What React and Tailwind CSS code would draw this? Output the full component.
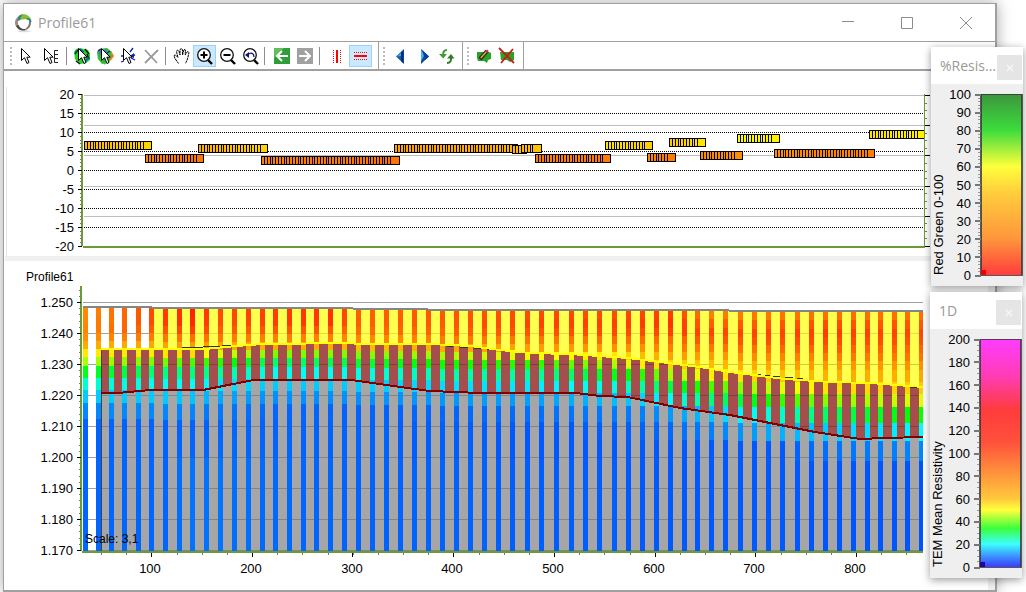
import React from "react";

const AXIS = "#6b9b34";
const LABEL = { fontFamily: "'Liberation Sans', Arial, sans-serif" };

/* ---------- toolbar icons ---------- */

function Icon({ children }) {
  return (
    <svg viewBox="0 0 20 20" className="h-5 w-5 shrink-0" fill="none" aria-hidden="true">
      {children}
    </svg>
  );
}

function Arrow({ x = 0 }) {
  return (
    <path
      transform={`translate(${x} 0)`}
      d="M6.5 2.5V14.5L9.5 11.7L12 17.5L14 16.5L11.8 11.2H15.2Z"
      fill="#fff"
      stroke="#000"
    />
  );
}

function Lens({ children }) {
  return (
    <Icon>
      <path d="M14 14L18 18" stroke="#000" strokeWidth="2.4" />
      <circle cx="10" cy="9" r="6.3" fill="#fff" stroke="#111" strokeWidth="1.3" />
      {children}
    </Icon>
  );
}

const icons = {
  select: (
    <Icon>
      <Arrow />
    </Icon>
  ),
  selectE: (
    <Icon>
      <Arrow x={-4} />
      <path d="M16 4.5H12.5V16.5H16M12.5 8.5H16M12.5 12.5H16" stroke="#222" />
    </Icon>
  ),
  greenSelect: (
    <Icon>
      <path d="M4 3L8 2L12 3L16 4L18 8V14L14 17L8 18L3 13L2 6Z" fill="#1fd51f" />
      <path d="M3 8L6 4M13 3L17 8M15 8L17 13M4 15L8 18" stroke="#111" strokeWidth="1.4" />
      <path d="M8 3L12 6M13 16L17 11M3 6H5" stroke="#174bd0" strokeWidth="1.4" />
      <Arrow />
    </Icon>
  ),
  colorSelect: (
    <Icon>
      <path d="M4 3L12 2L17 6L18 11L14 16L7 18L3 13L2 6Z" fill="#35b13f" />
      <path d="M4 4H13L16 8H4Z" fill="#4777c4" />
      <path d="M16 7L18 10L15 14" stroke="#f08019" strokeWidth="2" />
      <path d="M3 11L7 16M12 4L15 8M9 18L14 14" stroke="#21d521" strokeWidth="2" />
      <path d="M3 5L6 3M12 7L15 5" stroke="#222a7c" strokeWidth="1.5" />
      <Arrow />
    </Icon>
  ),
  lineSelect: (
    <Icon>
      <path d="M15 2L12 6M3 10H6M3 16L6 15M12 10L17 9M13 12L17 14" stroke="#0b18d8" strokeWidth="1.3" />
      <path d="M12 10L16 7V12Z" fill="#082a9a" />
      <Arrow x={-1} />
    </Icon>
  ),
  cross: (
    <Icon>
      <path d="M4 4L16 17M17 4L4 17" stroke="#9a9a9a" strokeWidth="1.8" />
    </Icon>
  ),
  hand: (
    <Icon>
      <path
        d="M7.5 17.5L4 12.5L3 9.5L4.5 9L7 11.5L5.5 5.5L6.5 4L8 5L9 9V3.5L10.5 2.5L11.5 4V9L13 3.5L14.5 4L14.2 9L16.5 5.5L18 6.5L16.5 13L14.5 17.5"
        fill="#fff"
        stroke="#000"
        strokeDasharray="2.5 .5"
      />
    </Icon>
  ),
  zoomIn: (
    <Lens>
      <path d="M6.5 9H13.5M10 5.5V12.5" stroke="#000" strokeWidth="2" />
    </Lens>
  ),
  zoomOut: (
    <Lens>
      <path d="M6.5 9H13.5" stroke="#000" strokeWidth="2" />
    </Lens>
  ),
  zoomBack: (
    <Lens>
      <path d="M5 9L9 6V12Z" fill="#101080" />
      <path d="M8 8.5C11 6 14 7 14 11" stroke="#101080" strokeWidth="1.3" />
    </Lens>
  ),
  left: (
    <Icon>
      <rect x="2" y="2" width="16" height="16" fill="#2f9e3a" />
      <path d="M2 2H12L2 12Z" fill="#62bd5f" />
      <path d="M16 10H5M10 5L5 10L10 15" stroke="#fff" strokeWidth="2" />
    </Icon>
  ),
  right: (
    <Icon>
      <rect x="2" y="2" width="16" height="16" fill="#a0a0a0" />
      <path d="M4 10H15M10 5L15 10L10 15" stroke="#fff" strokeWidth="2" />
    </Icon>
  ),
  vertical: (
    <Icon>
      <rect x="9" y="4" width="2" height="13" fill="#f00" />
      <path d="M6.5 4V17M13.5 4V17" stroke="#f00" strokeDasharray="1 1" />
    </Icon>
  ),
  horizontal: (
    <Icon>
      <rect x="4" y="9" width="13" height="2" fill="#f00" />
      <path d="M4 6.5H17M4 13.5H17" stroke="#f00" strokeDasharray="1 1" />
    </Icon>
  ),
  previous: (
    <Icon>
      <path d="M14 3V18L6 10.5Z" fill="#0b5fb4" />
      <path d="M13.5 4V17.5L11 15V6.5Z" fill="#062d75" />
      <path d="M7 10.5L11 6.8V10Z" fill="#3fa5e8" />
    </Icon>
  ),
  next: (
    <Icon>
      <path d="M8 3V18L16 10.5Z" fill="#0a4fa8" />
      <path d="M8 4L12 8L8 15Z" fill="#48aef0" />
      <path d="M9 3.8L16 10.5L12 14Z" fill="#0b3f96" />
    </Icon>
  ),
  refresh: (
    <Icon>
      <path d="M11 4C8 4 7 6 7.2 9" stroke="#3f9a35" strokeWidth="2" />
      <path d="M3 8H11L7.2 12.5Z" fill="#3f9a35" />
      <path d="M11 17C14.5 17 15.2 14.5 15 12" stroke="#2c7d25" strokeWidth="2" />
      <path d="M11 12.5H18.5L15 8Z" fill="#2c7d25" />
    </Icon>
  ),
  edit: (
    <Icon>
      <path d="M3 6H15L17 7V13L14 14L13 17L10 15H4L3 12Z" fill="#27a327" />
      <path d="M6 13L13 5" stroke="#3c2222" strokeWidth="4" />
      <path d="M6.8 12L12.5 5.5" stroke="#d6b04c" strokeWidth="1.4" />
      <path d="M12 6.5L14 4.3" stroke="#c83a3a" strokeWidth="2.2" />
    </Icon>
  ),
  remove: (
    <Icon>
      <path d="M3 6H17V14L13 16L10 14L4 14Z" fill="#27a327" />
      <path d="M2 2L17 17M16 3L4 17" stroke="#d01818" strokeWidth="1.8" />
    </Icon>
  ),
};

function Tool({ name, label, active = false, wide = false }) {
  return (
    <button
      type="button"
      aria-label={label}
      className={`flex h-[22px] shrink-0 items-center border ${wide ? "w-[27px] pl-1" : "w-[23px]"} ${
        active ? "border-[#99d1ff] bg-[#cce8ff]" : "border-transparent"
      }`}
    >
      {icons[name]}
    </button>
  );
}

const Separator = ({ wide = false }) => (
  <div className={`ml-0.5 h-[18px] w-px bg-[#8c8c8c] ${wide ? "mr-1.5" : "mr-1"}`} />
);

function Grip() {
  return (
    <div className="mr-px flex h-5 w-[3px] flex-col justify-between py-px">
      {[0, 1, 2, 3, 4].map((i) => (
        <span key={i} className="h-0.5 w-0.5 bg-[#bdbdbd]" />
      ))}
    </div>
  );
}

function Toolbar() {
  return (
    <div role="toolbar" aria-label="Profile tools" className="flex h-[30px] border-b-2 border-t border-[#a0a0a0] bg-white">
      <div className="flex items-center border-r border-[#a0a0a0] pl-1.5 pr-1.5">
        <Grip />
        <Tool name="select" label="Select" />
        <Tool name="selectE" label="Select element" wide />
        <Separator />
        <Tool name="greenSelect" label="Select models" />
        <Tool name="colorSelect" label="Select colored models" />
        <Tool name="lineSelect" label="Select line" />
        <Tool name="cross" label="Delete" />
        <Separator />
        <Tool name="hand" label="Pan" />
        <Tool name="zoomIn" label="Zoom in" active />
        <Tool name="zoomOut" label="Zoom out" />
        <Tool name="zoomBack" label="Zoom previous" />
        <Separator wide />
        <Tool name="left" label="Move left" />
        <Tool name="right" label="Move right" />
        <Separator wide />
        <Tool name="vertical" label="Vertical marker" />
        <Tool name="horizontal" label="Horizontal marker" active />
      </div>
      <div className="flex items-center border-r border-[#a0a0a0] px-1">
        <Grip />
        <div className="w-0.5" />
        <Tool name="previous" label="Previous profile" />
        <Tool name="next" label="Next profile" />
        <Tool name="refresh" label="Refresh" />
      </div>
      <div className="flex items-center border-r border-[#a0a0a0] px-1">
        <Grip />
        <div className="w-0.5" />
        <Tool name="edit" label="Edit surface" />
        <Tool name="remove" label="Remove surface" />
      </div>
    </div>
  );
}

/* ---------- residual chart ---------- */

// [x start, x end, top, fill at start, fill at end]
const residuals = [
  [84, 152, 141, "#ffb700", "#ffd800"],
  [145, 204, 154, "#ff8a00", "#ff7600"],
  [198, 268, 144, "#ffb000", "#ffd800"],
  [261, 400, 156, "#ff8400", "#ff7200"],
  [394, 518, 144, "#ffa400", "#ffb400"],
  [512, 527, 145, "#ffb400", "#ffc400"],
  [521, 542, 144, "#ffb800", "#ffc800"],
  [535, 611, 154, "#ff8000", "#ff7c00"],
  [605, 653, 141, "#ffe800", "#ffcc00"],
  [647, 676, 153, "#ff8600", "#ff7800"],
  [669, 706, 138, "#ffc800", "#ffe600"],
  [700, 743, 151, "#ff8800", "#ff8e00"],
  [737, 780, 134, "#ffff00", "#fff000"],
  [774, 875, 149, "#ff9000", "#ff7e00"],
  [869, 925, 130, "#ffe000", "#fff000"],
];

function range(from, to, step) {
  const out = [];
  for (let v = from; v <= to + 0.001; v += step) out.push(v);
  return out;
}

function ResidualChart() {
  return (
    <svg viewBox="5 71 983 185" className="block h-auto w-full" role="img" aria-label="Residual chart">
      <g shapeRendering="crispEdges">
        <rect x="6" y="87" width="1" height="169" fill="#e3e3e3" />
        {[95, 125, 155, 186, 216].map((y) => (
          <rect key={y} x="84" y={y} width="841" height="1" fill="#bdbdbd" />
        ))}
        {range(113, 227, 19).map((y) => (
          <path key={y} d={`M84 ${y + 0.5}H924`} stroke="#000" strokeDasharray="1 1" />
        ))}
        {residuals.map(([x1, x2, y, a, b], i) => (
          <g key={i}>
            <linearGradient id={`res${i}`}>
              <stop offset="0" stopColor={a} />
              <stop offset="1" stopColor={b} />
            </linearGradient>
            <rect x={x1 + 0.5} y={y + 0.5} width={x2 - x1 - 1} height="8" fill={`url(#res${i})`} stroke="#000" />
            {range(x1 + 3, x2 - 8, 2.8).map((x) => (
              <rect key={x} x={Math.round(x)} y={y} width="1" height="9" fill="#000" />
            ))}
          </g>
        ))}
        <rect x="81" y="94" width="2" height="152" fill={AXIS} />
        <rect x="83" y="246" width="842" height="2" fill={AXIS} />
        <rect x="924" y="94" width="1" height="152" fill={AXIS} />
        {range(94, 246, 3.8).map((y) => (
          <rect key={y} x="80" y={Math.round(y)} width="1" height="1" fill="#777" />
        ))}
        {range(94, 246, 19).map((y) => (
          <rect key={y} x="78" y={y} width="4" height="1" fill="#000" />
        ))}
        {range(95, 246, 7.55).map((y) => (
          <rect key={y} x="925" y={Math.round(y)} width="2" height="1" fill="#777" />
        ))}
        {[95, 125, 155, 186, 216, 246].map((y) => (
          <rect key={y} x="925" y={y} width="5" height="1" fill="#000" />
        ))}
      </g>
      <g fontSize="13" textAnchor="end" fill="#000" style={LABEL}>
        {[20, 15, 10, 5, 0, -5, -10, -15, -20].map((v, i) => (
          <text key={v} x="74" y={99 + 19 * i}>
            {v}
          </text>
        ))}
      </g>
    </svg>
  );
}

/* ---------- resistivity section ---------- */

const columns = [
  83, 96, 109, 122, 136, 149, 163, 177, 190, 204, 218, 232, 246, 260, 273, 287, 301, 314, 328, 342, 356, 370, 384,
  398, 412, 426, 440, 454, 468, 482, 496, 510, 525, 539, 554, 569, 583, 597, 612, 626, 640, 654, 668, 682, 695, 709,
  723, 738, 752, 766, 780, 795, 809, 823, 837, 851, 865, 878, 892, 905, 919,
];

const layerDepths = [0, 8, 17, 25, 33, 41, 49, 58, 70, 82, 95, 111, 129, 149];

// Hue of every layer at selected distances; values between are interpolated.
const layerHues = [
  [83, [33, 32, 31, 34, 40, 55, 80, 125, 168, 192, 208, 217, 217, 216]],
  [122, [24, 24, 24, 30, 40, 56, 86, 136, 172, 192, 208, 217, 217, 216]],
  [163, [14, 14, 20, 28, 38, 54, 94, 152, 177, 192, 208, 217, 217, 216]],
  [190, [8, 9, 14, 26, 36, 52, 104, 150, 178, 194, 209, 217, 216, 213]],
  [218, [18, 18, 22, 28, 38, 70, 112, 156, 186, 200, 212, 216, 215, 213]],
  [273, [14, 14, 20, 30, 40, 92, 146, 177, 192, 206, 216, 217, 216, 215]],
  [328, [12, 12, 20, 30, 40, 90, 140, 177, 192, 206, 216, 217, 217, 216]],
  [356, [22, 22, 25, 32, 44, 92, 135, 174, 192, 206, 217, 217, 217, 217]],
  [440, [21, 21, 23, 29, 40, 82, 118, 160, 188, 204, 216, 218, 218, 217]],
  [539, [17, 15, 19, 27, 37, 60, 110, 156, 184, 202, 214, 219, 219, 218]],
  [612, [18, 15, 17, 25, 34, 54, 80, 126, 172, 195, 211, 218, 219, 218]],
  [640, [16, 14, 18, 25, 34, 44, 56, 112, 158, 190, 210, 217, 219, 219]],
  [668, [14, 12, 15, 24, 30, 38, 50, 82, 136, 178, 204, 215, 219, 219]],
  [709, [30, 22, 16, 20, 28, 36, 44, 57, 104, 150, 193, 210, 219, 219]],
  [780, [27, 20, 16, 18, 24, 31, 38, 46, 68, 108, 166, 198, 219, 219]],
  [820, [26, 18, 14, 17, 22, 29, 36, 42, 54, 90, 145, 192, 214, 220]],
  [923, [26, 21, 17, 19, 24, 27, 34, 40, 48, 66, 116, 180, 208, 220]],
];

function huesAt(x) {
  let i = 0;
  while (i < layerHues.length - 2 && layerHues[i + 1][0] < x) i++;
  const [x0, a] = layerHues[i];
  const [x1, b] = layerHues[i + 1];
  const t = (x - x0) / (x1 - x0);
  return a.map((h, k) => h + (b[k] - h) * t);
}

function surfaceAt(x) {
  if (x < 152) return 308;
  if (x < 353) return 309;
  if (x < 428) return 310;
  if (x < 729) return 311;
  return 312;
}

const topLine =
  "101,349 205,349 225,347 262,344 352,343 356,344 430,344 470,346 500,350 530,353 570,354 628,358 668,363 700,367 730,372 785,379 830,382 870,383 923,387";
const baseLine =
  "101,393 118,393 150,390 203,390 228,385 254,380 352,380 400,387 430,391 480,393 576,393 600,396 628,397 680,408 730,415 780,425 815,432 860,439 885,438 923,437";
const reversed = (points) => points.split(" ").reverse().join(" ");

function SectionChart() {
  return (
    <svg viewBox="5 261 983 329" className="block h-auto w-full" role="img" aria-label="Resistivity section">
      <g shapeRendering="crispEdges">
        <polygon
          fill="#ffff50"
          points={`152,308 353,308 353,309 729,310 729,312 923,312 ${reversed(topLine.replace("101,349", "152,349"))}`}
        />
        <polygon fill="#a64d4d" points={`${topLine} ${reversed(baseLine)}`} />
        <polygon fill="#a6a6a6" points={`${baseLine} 923,551 101,551`} />
        {range(302, 550, 31).map((y) => {
          const start = y > 349 ? 101 : 152;
          return (
            <g key={y}>
              <rect x="83" y={y} width={start - 83} height="1" fill="#a0a0a0" />
              <rect
                x={start}
                y={y}
                width={923 - start}
                height="1"
                fill={y === 302 ? "#a0a0a0" : "#000"}
                fillOpacity={y === 302 ? 1 : y < 340 ? 0.12 : 0.2}
              />
            </g>
          );
        })}
        <rect x="101" y="349" width="1" height="202" fill="#444" />
        {columns.map((x) => {
          const s = surfaceAt(x);
          const hues = huesAt(x);
          const w = Math.min(5, 923 - x);
          return (
            <g key={x}>
              {layerDepths.map((d, k) => (
                <rect
                  key={d}
                  x={x}
                  y={s + d}
                  width={w}
                  height={(k < 13 ? s + layerDepths[k + 1] : 551) - s - d}
                  fill={`hsl(${hues[k].toFixed(0)} 100% 50%)`}
                />
              ))}
            </g>
          );
        })}
        <path
          d="M83 307H152M152 308H353M353 309H428M428 310H729M729 311H923"
          stroke="#858585"
          strokeWidth="2"
        />
        <path
          d="M182 347.5H203M203 346.5H222M222 345.5H241M278 344.5H286M292 344.5H301M447 346.5H453M460 347.5H468M474 348.5H482M487 349.5H503M757 374.5H761M765 375.5H770M773 376.5H780M785 377.5H793M797 378.5H803M890 385.5H900M910 387.5H923"
          stroke="#333"
          fill="none"
        />
        <polyline points={topLine} fill="none" stroke="#ff0" strokeWidth="2" />
        <polyline points={baseLine} fill="none" stroke="#800000" strokeWidth="2" />
        <rect x="80" y="286" width="2" height="265" fill={AXIS} />
        <rect x="82" y="551" width="841" height="2" fill={AXIS} />
        {range(289.6, 550, 6.2).map((y) => (
          <rect key={y} x="79" y={Math.round(y)} width="1" height="1" fill="#777" />
        ))}
        {range(302, 550, 31).map((y) => (
          <rect key={y} x="77" y={y} width="4" height="1" fill="#000" />
        ))}
        {range(101, 923, 25.17).map((x) => (
          <rect key={x} x={Math.round(x)} y="553" width="1" height="2" fill="#777" />
        ))}
        {range(151, 860, 100.7).map((x) => (
          <rect key={x} x={Math.round(x)} y="553" width="1" height="4" fill="#000" />
        ))}
      </g>
      <g fill="#000" style={LABEL}>
        <g fontSize="12">
          <text x="26" y="281">
            Profile61
          </text>
          <text x="85" y="543">
            Scale: 3,1
          </text>
        </g>
        <g fontSize="13" textAnchor="end">
          {range(0, 8, 1).map((i) => (
            <text key={i} x="73" y={307 + 31 * i}>
              {(1.25 - 0.01 * i).toFixed(3)}
            </text>
          ))}
        </g>
        <g fontSize="13" textAnchor="middle">
          {range(1, 8, 1).map((i) => (
            <text key={i} x={Math.round(49.5 + 100.7 * i)} y="573">
              {i * 100}
            </text>
          ))}
        </g>
      </g>
    </svg>
  );
}

/* ---------- legend windows ---------- */

function Legend({ id, title, unit, ticks, barHeight, stops, marker, minor, className }) {
  const step = barHeight / (ticks.length - 1);
  return (
    <section aria-label={title} className={`absolute w-[92px] bg-white shadow-[0_2px_8px_rgba(0,0,0,0.4)] ${className}`}>
      <header className="flex h-[37px] items-center justify-between pl-[9px] pr-px">
        <h2 className="font-['Open_Sans',sans-serif] text-[14px] leading-5 text-[#999]">{title}</h2>
        <button
          type="button"
          aria-label={`Close ${title}`}
          className="mt-1 flex h-[25px] w-[25px] shrink-0 items-center justify-center bg-[#e5e5e5]"
        >
          <svg viewBox="0 0 8 8" className="h-2 w-2" aria-hidden="true">
            <path d="M1 1L7 7M7 1L1 7" stroke="#f6f6f6" strokeWidth="1.5" />
          </svg>
        </button>
      </header>
      <svg viewBox={`0 0 92 ${barHeight + 21}`} className="block h-auto w-full bg-[#efefef]" role="img" aria-label={unit}>
        <linearGradient id={id} x1="0" y1="0" x2="0" y2="1">
          {stops.map(([o, c]) => (
            <stop key={o} offset={o} stopColor={c} />
          ))}
        </linearGradient>
        <g shapeRendering="crispEdges">
          <rect x="50" y="10" width="41" height={barHeight} fill={`url(#${id})`} />
          <path d={`M91 10.5H50V${barHeight + 10.5}H91V10`} stroke="#333" strokeOpacity=".8" strokeWidth="1.5" fill="none" />
          <rect x="50" y={barHeight + 5} width="5" height="5" fill={marker} />
          {range(0, barHeight, step / minor).map((y) => (
            <rect key={y} x="47" y={Math.round(10 + y)} width="2" height="1" fill="#999" />
          ))}
          {ticks.map((t, i) => (
            <rect key={t} x="44" y={Math.round(9.5 + step * i)} width="6" height="2" fill="#777" />
          ))}
        </g>
        <g fontSize="13" fill="#000" style={LABEL}>
          <g textAnchor="end">
            {ticks.map((t, i) => (
              <text key={t} x="40" y={Math.round(15 + step * i)}>
                {t}
              </text>
            ))}
          </g>
          <text transform={`translate(12 ${barHeight + 10}) rotate(-90)`}>{unit}</text>
        </g>
      </svg>
    </section>
  );
}

/* ---------- main window ---------- */

function Logo() {
  return (
    <svg viewBox="0 0 20 20" className="h-5 w-5" fill="none" aria-hidden="true">
      <ellipse cx="11" cy="18.3" rx="6" ry="1" fill="#ddd" />
      <path d="M7 2.5C2 5 .5 10 3.5 14L6 13C4 9.5 5 6.5 8 5Z" fill="#a18b7c" />
      <path d="M3 13C5 17 9 18.5 13 17L12 16C9 16.5 7 15 5.5 12Z" fill="#4a4a48" />
      <path d="M13 17C17 15.5 19 11 17.5 7L16 7C16.5 10.5 15.5 14 12 16Z" fill="#77756c" />
      <path d="M6 2.5C10 0 16 1 18.5 7L17.5 8C14 6 10 5.5 6 7.5Z" fill="#84bd31" />
      <path d="M5.5 3.5C7 2 9 1.5 10 1.5C8 3 7.5 5 7 7L4.5 8Z" fill="#27839a" />
      <path d="M14 6C16 5 17 7 18 9" stroke="#27839a" strokeWidth="1.5" />
    </svg>
  );
}

function TitleBar() {
  return (
    <header className="flex h-[37px] items-center bg-white pl-[9px]">
      <Logo />
      <h1 className="ml-[5px] flex-1 font-['Open_Sans',sans-serif] text-[14px] leading-5 text-[#999]">Profile61</h1>
      <div className="flex">
        {[
          ["Minimize", "M4 8.5H16"],
          ["Maximize", "M4.5 4.5H15.5V15.5H4.5Z"],
          ["Close", "M4 4L16 16M16 4L4 16"],
        ].map(([label, d]) => (
          <button key={label} type="button" aria-label={label} className="flex h-9 w-[59px] items-center justify-center">
            <svg viewBox="0 0 20 20" className="h-5 w-5" fill="none" aria-hidden="true">
              <path d={d} stroke="#8c8c8c" />
            </svg>
          </button>
        ))}
      </div>
    </header>
  );
}

export default function App() {
  return (
    <div className="relative min-h-screen overflow-hidden bg-white pl-[3px] pr-[29px] pt-[3px] font-['Liberation_Sans',Arial,sans-serif]">
      <main className="border border-b-2 border-r-2 border-[#a0a0a0] bg-white shadow-[0_0_14px_rgba(0,0,0,0.35)]">
        <TitleBar />
        <Toolbar />
        <div className="flex">
          <div className="min-w-0 flex-1 pl-px">
            <ResidualChart />
            <div className="h-[5px] bg-[#efefef]" />
            <SectionChart />
          </div>
          <div className="w-[7px] shrink-0 bg-[#efefef]" />
        </div>
      </main>
      <Legend
        id="percent"
        title="%Resis..."
        unit="Red Green 0-100"
        className="right-[3px] top-[47px]"
        ticks={[100, 90, 80, 70, 60, 50, 40, 30, 20, 10, 0]}
        barHeight={181}
        minor={5}
        marker="#f00000"
        stops={[
          [0, "#3c963c"],
          [0.2, "#3cdc3c"],
          [0.4, "#ffff3c"],
          [0.55, "#ffcc3c"],
          [0.8, "#ff963c"],
          [1, "#ff3c3c"],
        ]}
      />
      <Legend
        id="mean"
        title="1D"
        unit="TEM Mean Resistivity"
        className="right-1 top-[292px]"
        ticks={[200, 180, 160, 140, 120, 100, 80, 60, 40, 20, 0]}
        barHeight={228}
        minor={4}
        marker="#280096"
        stops={[
          [0, "#ff3cff"],
          [0.17, "#ff3cb0"],
          [0.31, "#ff3c3c"],
          [0.45, "#ff503c"],
          [0.7, "#ffc83c"],
          [0.75, "#ffff3c"],
          [0.83, "#3cff3c"],
          [0.9, "#3cffff"],
          [0.95, "#3c96ff"],
          [1, "#3c3cff"],
        ]}
      />
    </div>
  );
}
